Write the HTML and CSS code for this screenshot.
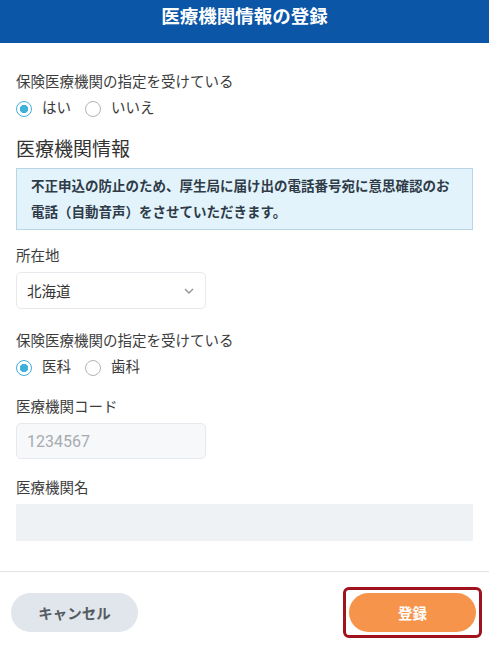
FILE: index.html
```html
<!DOCTYPE html>
<html lang="ja">

<head>
    <meta charset="UTF-8">
    <meta name="viewport" content="width=device-width, initial-scale=1.0">
    <title>医療機関情報の登録</title>
    <link rel="stylesheet" href="styles.css">
</head>

<body>
    <header class="top-bar">
        <h1>医療機関情報の登録</h1>
    </header>

    <main class="form-body">
        <div class="field">
            <div class="label">保険医療機関の指定を受けている</div>
            <div class="radio-row">
                <label class="radio"><span class="dot checked"></span>はい</label>
                <label class="radio"><span class="dot"></span>いいえ</label>
            </div>
        </div>

        <h2 class="section-title">医療機関情報</h2>
        <div class="notice">
            不正申込の防止のため、厚生局に届け出の電話番号宛に意思確認のお電話（自動音声）をさせていただきます。
        </div>

        <div class="field gap-lg">
            <div class="label">所在地</div>
            <div class="select">
                <span>北海道</span>
                <svg class="chevron" width="10" height="6" viewBox="0 0 10 6">
                    <path d="M1 1l4 4 4-4" fill="none" stroke="#8f959b" stroke-width="1.4" />
                </svg>
            </div>
        </div>

        <div class="field gap-md">
            <div class="label">保険医療機関の指定を受けている</div>
            <div class="radio-row">
                <label class="radio"><span class="dot checked"></span>医科</label>
                <label class="radio"><span class="dot"></span>歯科</label>
            </div>
        </div>

        <div class="field gap-sm">
            <div class="label">医療機関コード</div>
            <div class="input short">1234567</div>
        </div>

        <div class="field gap-sm">
            <div class="label">医療機関名</div>
            <div class="input wide"></div>
        </div>
    </main>

    <footer class="actions">
        <button class="btn cancel">キャンセル</button>
        <span class="highlight"><button class="btn submit">登録</button></span>
    </footer>
</body>

</html>
```

FILE: styles.css
```css
body {
    margin: 0;
    font-family: Roboto, "Noto Sans CJK JP", sans-serif;
    color: #3a3a3a;
    background: #fff;
}

.top-bar {
    background-color: #0b56a6;
    height: 43px;
    box-sizing: border-box;
    padding-top: 5px;
    text-align: center;
}

.top-bar h1 {
    margin: 0;
    color: #fff;
    font-size: 18.5px;
    line-height: 24px;
    font-weight: 700;
}

.form-body {
    padding: 30px 16px 0;
}

.field {
    display: flex;
    flex-direction: column;
    gap: 5px;
}

.gap-lg {
    margin-top: 17px;
}

.gap-md {
    margin-top: 23px;
}

.gap-sm {
    margin-top: 20px;
}

.label {
    font-size: 14.5px;
    line-height: 20px;
    color: #3c3c3c;
}

.radio-row {
    display: flex;
    gap: 14px;
    margin-top: 1px;
    font-size: 14.5px;
    line-height: 20px;
}

.radio {
    display: flex;
    align-items: center;
    gap: 10px;
}

.dot {
    width: 16px;
    height: 16px;
    box-sizing: border-box;
    border: 1.5px solid #b3b3b3;
    border-radius: 50%;
    display: inline-block;
}

.dot.checked {
    border-color: #41b1dc;
    background: radial-gradient(circle, #41b1dc 0 3.8px, #fff 4.5px);
}

.section-title {
    margin: 18px 0 5px;
    font-size: 19px;
    line-height: 26px;
    font-weight: 400;
    color: #333;
}

.notice {
    background-color: #e2f3fc;
    border: 1px solid #b9d6e8;
    padding: 4px 14px;
    font-size: 13.5px;
    line-height: 26px;
    font-weight: 700;
    color: #2f3b47;
}

.select,
.input {
    box-sizing: border-box;
    height: 37px;
    border: 1px solid #e6e9ed;
    border-radius: 5px;
    display: flex;
    align-items: center;
    padding: 0 10px;
}

.select {
    width: 190px;
    justify-content: space-between;
    font-size: 14.5px;
    color: #333;
}

.chevron {
    margin-right: 1px;
}

.input.short {
    width: 190px;
    height: 36px;
    background: #f6f8fa;
    color: #a7abb0;
    font-size: 16px;
}

.input.wide {
    height: 37px;
    background: #eef2f5;
    border-color: #eef2f5;
    border-radius: 0;
}

.actions {
    margin-top: 30px;
    border-top: 1px solid #e3e3e3;
    padding: 15px 7px 0 11px;
    display: flex;
    justify-content: space-between;
    align-items: center;
}

.btn {
    border: none;
    width: 127px;
    height: 39px;
    border-radius: 20px;
    font-family: Roboto, "Noto Sans CJK JP", sans-serif;
    font-size: 14.5px;
    font-weight: 700;
}

.cancel {
    background-color: #e0e6ec;
    color: #555b61;
}

.submit {
    background-color: #f7944b;
    color: #fff;
}

.highlight {
    display: inline-flex;
    border: 3px solid #a1121c;
    border-radius: 6px;
    padding: 3px;
}
```
